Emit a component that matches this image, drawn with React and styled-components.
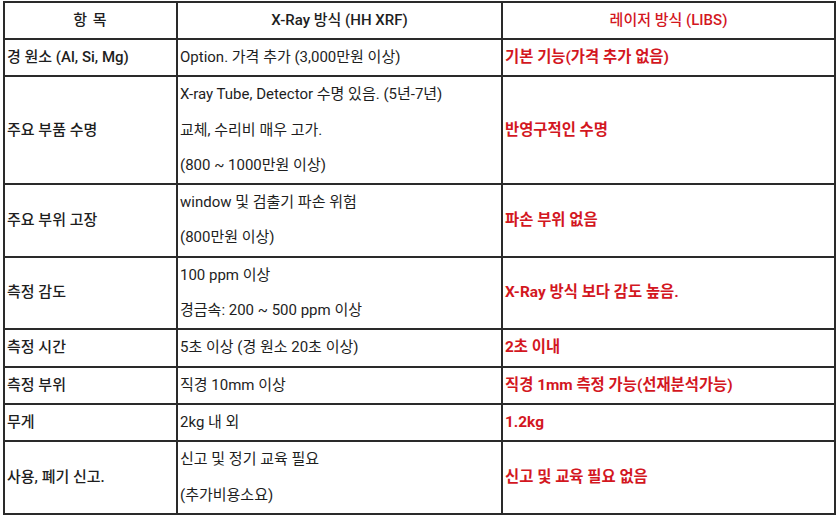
import React from 'react'
import styled, { createGlobalStyle } from 'styled-components'

const GlobalStyle = createGlobalStyle`
  html, body {
    margin: 0;
    padding: 0;
    background: #ffffff;
  }
  body {
    font-family: Roboto, "Noto Sans CJK KR", sans-serif;
    color: #1e1e1e;
  }
`

const Page = styled.div`
  width: 840px;
  height: 520px;
  padding: 1px 0 0 3px;
  box-sizing: border-box;
  background: #fff;
`

const Table = styled.table`
  width: 831px;
  border-collapse: collapse;
  table-layout: fixed;
  font-size: 15px;
  border: 2px solid #2a2a2a;
`

const Col = styled.col`
  width: ${p => p.$w}px;
`

const HeadCell = styled.th`
  border: 2px solid #2a2a2a;
  padding: 0 2px;
  height: 35px;
  line-height: 35px;
  text-align: center;
  font-weight: 500;
  color: ${p => (p.$red ? '#d3171f' : '#1e1e1e')};
  letter-spacing: ${p => (p.$wide ? '1px' : '0')};
`

const ItemCell = styled.td`
  border: 2px solid #2a2a2a;
  padding: 0 2px;
  line-height: 35.3px;
  vertical-align: middle;
  font-weight: 500;
  white-space: nowrap;
`

const XrayCell = styled(ItemCell)`
  font-weight: 400;
`

const LibsCell = styled(ItemCell)`
  color: #d3171f;
  font-weight: 700;
  font-size: 15.4px;
`

const Line = styled.div`
  line-height: 35.3px;
`

const rows = [
  { item: '경 원소 (Al, Si, Mg)', xray: ['Option. 가격 추가 (3,000만원 이상)'], libs: '기본 기능(가격 추가 없음)' },
  {
    item: '주요 부품 수명',
    xray: ['X-ray Tube, Detector 수명 있음. (5년-7년)', '교체, 수리비 매우 고가.', '(800 ~ 1000만원 이상)'],
    libs: '반영구적인 수명',
  },
  { item: '주요 부위 고장', xray: ['window 및 검출기 파손 위험', '(800만원 이상)'], libs: '파손 부위 없음' },
  { item: '측정 감도', xray: ['100 ppm 이상', '경금속: 200 ~ 500 ppm 이상'], libs: 'X-Ray 방식 보다 감도 높음.' },
  { item: '측정 시간', xray: ['5초 이상 (경 원소 20초 이상)'], libs: '2초 이내' },
  { item: '측정 부위', xray: ['직경 10mm 이상'], libs: '직경 1mm 측정 가능(선재분석가능)' },
  { item: '무게', xray: ['2kg 내 외'], libs: '1.2kg' },
  { item: '사용, 폐기 신고.', xray: ['신고 및 정기 교육 필요', '(추가비용소요)'], libs: '신고 및 교육 필요 없음' },
]

export default function App() {
  return (
    <Page>
      <GlobalStyle />
      <Table>
        <colgroup>
          <Col $w={173} />
          <Col $w={325} />
          <Col $w={333} />
        </colgroup>
        <thead>
          <tr>
            <HeadCell $wide>항 목</HeadCell>
            <HeadCell>X-Ray 방식 (HH XRF)</HeadCell>
            <HeadCell $red>레이저 방식 (LIBS)</HeadCell>
          </tr>
        </thead>
        <tbody>
          {rows.map(r => (
            <tr key={r.item}>
              <ItemCell>{r.item}</ItemCell>
              <XrayCell>
                {r.xray.map(l => (
                  <Line key={l}>{l}</Line>
                ))}
              </XrayCell>
              <LibsCell>{r.libs}</LibsCell>
            </tr>
          ))}
        </tbody>
      </Table>
    </Page>
  )
}
